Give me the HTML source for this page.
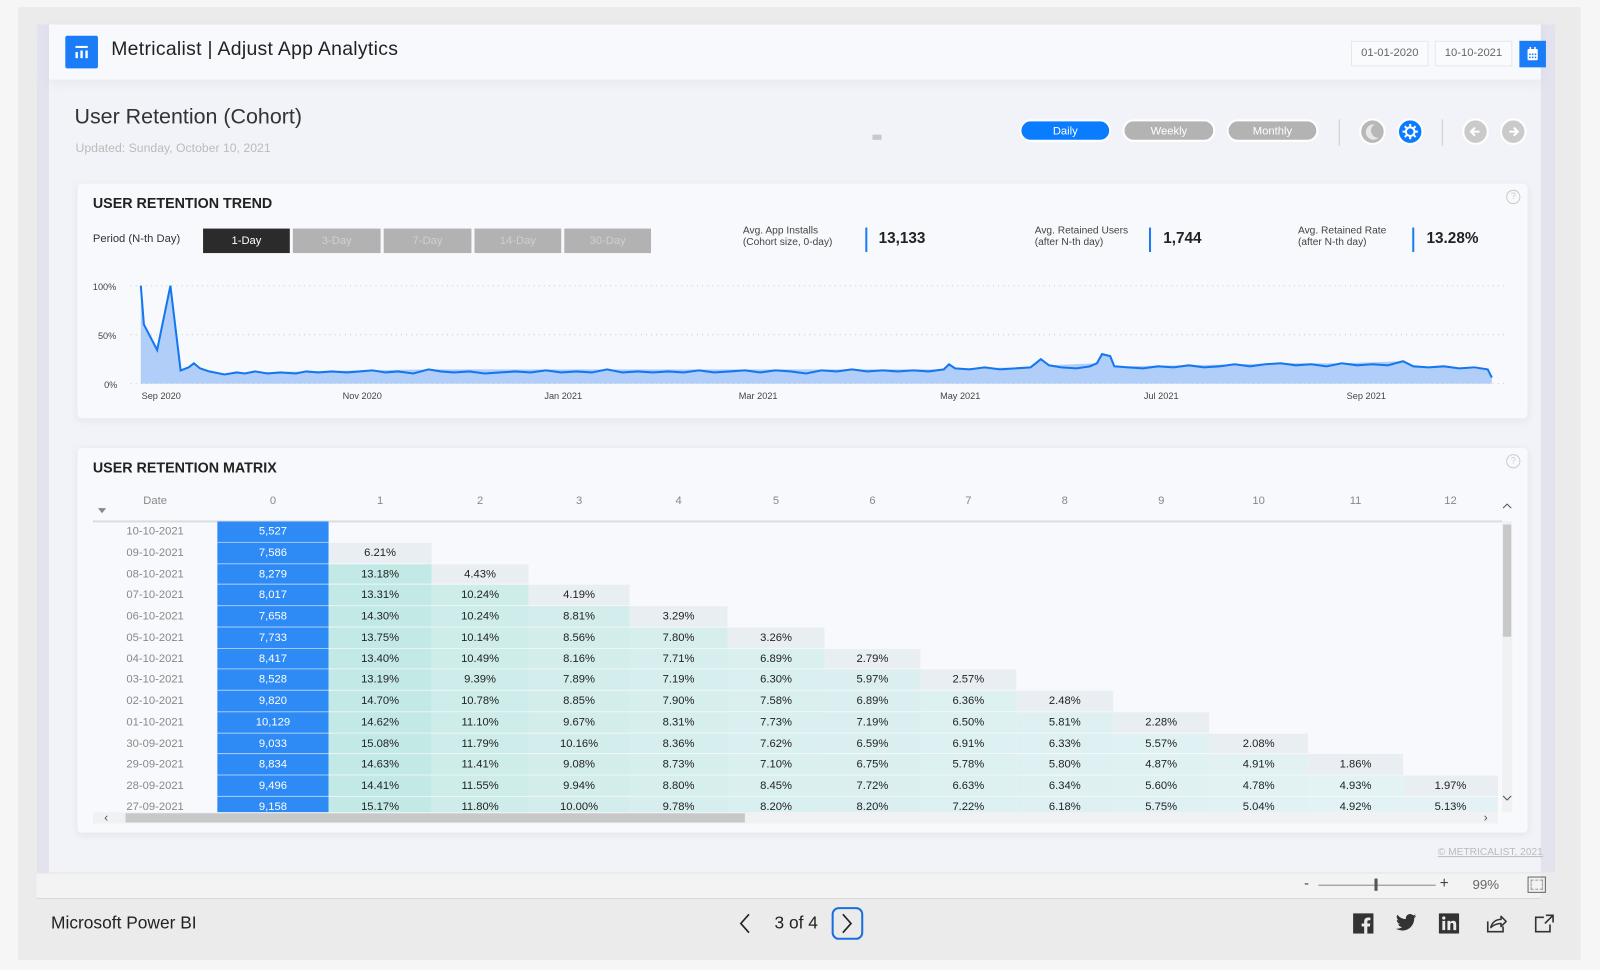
<!DOCTYPE html>
<html><head><meta charset="utf-8"><style>
*{margin:0;padding:0;box-sizing:border-box}
html,body{width:1600px;height:970px;overflow:hidden;background:#f6f6f6;font-family:"Liberation Sans",sans-serif}
#w{position:absolute;left:0;top:0;width:1568px;height:951px;transform:scale(1.020408);transform-origin:0 0;background:#f6f6f6}
.a{position:absolute}
.frame{left:18px;top:7px;width:1531px;height:934px;background:#ebebeb}
.canvas{left:36px;top:24px;width:1488px;height:831px;background:#f2f3f8}
.card{background:#f8f9fc;border-radius:4px;box-shadow:0 2px 8px rgba(150,155,190,.18)}
.pill{height:22px;border-radius:11px;color:#fff;font-size:11px;text-align:center;line-height:20px;border:2px solid #fff}
.circ{width:26px;height:26px;border-radius:50%;border:2px solid #fff}
.row{position:absolute;left:0;height:20.77px;display:flex;width:1377px}
.row div{height:100%;font-size:11px;line-height:20.77px;text-align:center;color:#222;border-bottom:1px solid rgba(255,255,255,.55)}
.row .d{width:122px;color:#888;background:transparent;border-bottom:none}
.row .c0{width:109px;background:#2e8af4;color:#fff}
.w1{width:101px;background:#c3e9e6}.w2{width:95px;background:#cdecea}.w3{width:99px;background:#d3edec}
.w4{width:96px;background:#d6eeee}.w5{width:95px;background:#d9eff0}.w6{width:94px;background:#dbeff1}
.w7{width:94px;background:#ddf0f2}.w8{width:95px;background:#dff0f3}.w9{width:94px;background:#e0f1f3}
.w10{width:97px;background:#e2f1f4}.w11{width:93px;background:#e3f2f5}.w12{width:93px;background:#e4f2f5}
.row .l{background:#e9eef3}
.hd{position:absolute;top:485px;font-size:11px;color:#888;text-align:center}
</style></head><body><div id="w">
<div class="a frame"></div>
<div class="a canvas"></div>
<div class="a" style="left:36px;top:24px;width:12px;height:831px;background:#e3e3ee"></div>
<div class="a" style="left:1510px;top:24px;width:14px;height:831px;background:#e3e3ee"></div>
<!-- header -->
<div class="a" style="left:48px;top:24px;width:1462px;height:54px;background:#f8f9fc;box-shadow:0 3px 10px rgba(160,165,200,.15)"></div>
<div class="a" style="left:64px;top:35px;width:32px;height:32px;background:#1a7cf7;border-radius:2px">
<svg width="32" height="32"><rect x="10" y="10" width="12" height="2" fill="#fff"/><rect x="10" y="16" width="2.3" height="6" fill="#fff"/><rect x="14.8" y="14.5" width="2.3" height="7.5" fill="#fff"/><rect x="19.7" y="14.5" width="2.3" height="7.5" fill="#fff"/></svg></div>
<div class="a" style="left:109px;top:38px;font-size:19px;color:#222;letter-spacing:.3px">Metricalist | Adjust App Analytics</div>
<div class="a" style="left:1324px;top:40px;width:76px;height:25px;border:1px solid #e6e7ee;font-size:11px;color:#666;text-align:center;line-height:23px;background:#fafbfd">01-01-2020</div>
<div class="a" style="left:1406px;top:40px;width:76px;height:25px;border:1px solid #e6e7ee;font-size:11px;color:#666;text-align:center;line-height:23px;background:#fafbfd">10-10-2021</div>
<div class="a" style="left:1489px;top:40px;width:26px;height:26px;background:#1a7cf7"><svg width="26" height="26"><rect x="8" y="8" width="10" height="11" rx="1" fill="#fff"/><rect x="10" y="6" width="1.5" height="3" fill="#fff"/><rect x="14.5" y="6" width="1.5" height="3" fill="#fff"/><g fill="#1a7cf7"><rect x="9.5" y="12.5" width="1.5" height="1.5"/><rect x="12.2" y="12.5" width="1.5" height="1.5"/><rect x="15" y="12.5" width="1.5" height="1.5"/><rect x="9.5" y="15.5" width="1.5" height="1.5"/><rect x="12.2" y="15.5" width="1.5" height="1.5"/><rect x="15" y="15.5" width="1.5" height="1.5"/></g></svg></div>
<!-- title -->
<div class="a" style="left:73px;top:103px;font-size:21px;color:#333">User Retention (Cohort)</div>
<div class="a" style="left:74px;top:138px;font-size:12px;color:#bbb">Updated: Sunday, October 10, 2021</div>
<div class="a" style="left:855px;top:132px;width:9px;height:5px;background:#c8c8cc"></div>
<div class="a pill" style="left:999px;top:117px;width:90px;background:#0a7cff">Daily</div>
<div class="a pill" style="left:1100px;top:117px;width:91px;background:#b3b3b3">Weekly</div>
<div class="a pill" style="left:1202px;top:117px;width:90px;background:#b3b3b3">Monthly</div>
<div class="a" style="left:1312px;top:117px;width:1px;height:26px;background:#ccc"></div>
<div class="a" style="left:1413px;top:117px;width:1px;height:26px;background:#ccc"></div>
<div class="a circ" style="left:1332px;top:116px;background:#b8b8b8"><svg width="22" height="22"><path d="M13 4 A7.5 7.5 0 1 0 17 17 A7 7 0 0 1 13 4Z" fill="#e8e8e8"/></svg></div>
<div class="a circ" style="left:1369px;top:116px;background:#0a7cff"><svg width="22" height="22"><g stroke="#fff" stroke-width="2"><circle cx="11" cy="11" r="4.2" fill="none"/><path d="M11 3.5v2.5M11 16v2.5M3.5 11h2.5M16 11h2.5M5.7 5.7l1.8 1.8M14.5 14.5l1.8 1.8M5.7 16.3l1.8-1.8M14.5 7.5l1.8-1.8"/></g></svg></div>
<div class="a circ" style="left:1433px;top:116px;background:#cacaca"><svg width="22" height="22"><path d="M15 11H7M10.5 7L6.5 11l4 4" stroke="#fff" stroke-width="2" fill="none"/></svg></div>
<div class="a circ" style="left:1470px;top:116px;background:#cacaca"><svg width="22" height="22"><path d="M7 11h8M11.5 7l4 4-4 4" stroke="#fff" stroke-width="2" fill="none"/></svg></div>
<!-- trend card -->
<div class="a card" style="left:76px;top:180px;width:1421px;height:230px"></div>
<div class="a" style="left:91px;top:191px;font-size:14px;font-weight:bold;color:#222">USER RETENTION TREND</div>
<div class="a" style="left:1476px;top:186px;width:14px;height:14px;border:1.5px solid #ccc;border-radius:50%;font-size:9px;color:#ccc;text-align:center;line-height:11px">?</div>
<div class="a" style="left:91px;top:228px;font-size:11px;color:#333">Period (N-th Day)</div>
<div class="a" style="left:199px;top:224px;width:85px;height:24px;background:#2b2b2b;color:#fff;font-size:11px;text-align:center;line-height:24px">1-Day</div>
<div class="a" style="left:287px;top:224px;width:86px;height:24px;background:#b2b2b2;color:#cfcfcf;font-size:11px;text-align:center;line-height:24px">3-Day</div>
<div class="a" style="left:376px;top:224px;width:86px;height:24px;background:#b2b2b2;color:#cfcfcf;font-size:11px;text-align:center;line-height:24px">7-Day</div>
<div class="a" style="left:465px;top:224px;width:85px;height:24px;background:#b2b2b2;color:#cfcfcf;font-size:11px;text-align:center;line-height:24px">14-Day</div>
<div class="a" style="left:553px;top:224px;width:85px;height:24px;background:#b2b2b2;color:#cfcfcf;font-size:11px;text-align:center;line-height:24px">30-Day</div>
<div class="a" style="left:728px;top:221px;font-size:10px;color:#444;line-height:11px">Avg. App Installs<br>(Cohort size, 0-day)</div>
<div class="a" style="left:848px;top:223px;width:2px;height:24px;background:#1a7cf7"></div>
<div class="a" style="left:861px;top:225px;font-size:15px;font-weight:bold;color:#222">13,133</div>
<div class="a" style="left:1014px;top:221px;font-size:10px;color:#444;line-height:11px">Avg. Retained Users<br>(after N-th day)</div>
<div class="a" style="left:1126px;top:223px;width:2px;height:24px;background:#1a7cf7"></div>
<div class="a" style="left:1140px;top:225px;font-size:15px;font-weight:bold;color:#222">1,744</div>
<div class="a" style="left:1272px;top:221px;font-size:10px;color:#444;line-height:11px">Avg. Retained Rate<br>(after N-th day)</div>
<div class="a" style="left:1384px;top:223px;width:2px;height:24px;background:#1a7cf7"></div>
<div class="a" style="left:1398px;top:225px;font-size:15px;font-weight:bold;color:#222">13.28%</div>
<svg class="a" style="left:0;top:0" width="1568" height="420">
<g stroke="#ccc" stroke-dasharray="1 4"><line x1="128" y1="280" x2="1475" y2="280"/><line x1="128" y1="328" x2="1475" y2="328"/><line x1="128" y1="376" x2="1475" y2="376"/></g>
<g font-size="9" fill="#444" font-family="Liberation Sans,sans-serif"><text x="91" y="284">100%</text><text x="96" y="332">50%</text><text x="102" y="380">0%</text>
<g text-anchor="middle"><text x="158" y="391">Sep 2020</text><text x="355" y="391">Nov 2020</text><text x="552" y="391">Jan 2021</text><text x="743" y="391">Mar 2021</text><text x="941" y="391">May 2021</text><text x="1138" y="391">Jul 2021</text><text x="1339" y="391">Sep 2021</text></g></g>
<path d="M138,280 L141,318 L154,343 L167,280 L177,363 L185,360 L190,356 L196,361 L205,364 L220,367 L232,365 L300,364 L420,362 L595,362 L835,362 L925,362 L930,357 L936,361 L1010,360 L1020,352 L1028,358 L1075,356 L1080,347 L1088,349 L1092,359 L1165,358 L1255,356 L1315,356 L1375,354 L1385,359 L1458,362 L1462,370 L1462,376 L138,376Z" fill="#a8c9f7" opacity=".9"/>
<path d="M138,280 L141,318 L154,343 L167,280 L177,363 L185,360 L190,356 L196,361 L205,364 L220,367 L232,365 L240,366 L250,364 L262,366 L275,365 L290,366 L300,364 L312,365 L325,364 L340,365 L352,364 L365,363 L378,365 L390,364 L405,366 L420,362 L432,364 L445,365 L460,364 L475,366 L490,365 L505,364 L520,365 L535,363 L550,365 L565,364 L580,365 L595,362 L610,365 L625,364 L640,365 L655,364 L670,365 L685,363 L700,365 L715,364 L730,363 L745,365 L760,363 L775,364 L790,366 L805,363 L820,364 L835,362 L850,364 L865,363 L880,364 L895,363 L910,364 L925,362 L930,357 L936,361 L950,362 L965,360 L980,362 L995,361 L1010,360 L1020,352 L1028,358 L1040,360 L1055,361 L1068,359 L1075,356 L1080,347 L1088,349 L1092,359 L1105,360 L1120,361 L1135,359 L1150,360 L1165,358 L1180,360 L1195,359 L1210,357 L1225,359 L1240,357 L1255,356 L1270,358 L1285,357 L1300,359 L1315,356 L1330,358 L1345,357 L1360,358 L1375,354 L1385,359 L1400,360 L1415,359 L1430,361 L1445,360 L1458,362 L1462,370" fill="none" stroke="#1577f0" stroke-width="2"/>
</svg>
<!-- matrix card -->
<div class="a card" style="left:76px;top:439px;width:1421px;height:377px"></div>
<div class="a" style="left:91px;top:450px;font-size:14px;font-weight:bold;color:#222">USER RETENTION MATRIX</div>
<div class="a" style="left:1476px;top:445px;width:14px;height:14px;border:1.5px solid #ccc;border-radius:50%;font-size:9px;color:#ccc;text-align:center;line-height:11px">?</div>
<div class="hd" style="left:91px;width:122px">Date</div>
<div class="a" style="left:96px;top:498px;width:0;height:0;border-left:4px solid transparent;border-right:4px solid transparent;border-top:5px solid #888"></div>
<div class="hd" style="left:213px;width:109px">0</div><div class="hd" style="left:322px;width:101px">1</div><div class="hd" style="left:423px;width:95px">2</div><div class="hd" style="left:518px;width:99px">3</div><div class="hd" style="left:617px;width:96px">4</div><div class="hd" style="left:713px;width:95px">5</div><div class="hd" style="left:808px;width:94px">6</div><div class="hd" style="left:902px;width:94px">7</div><div class="hd" style="left:996px;width:95px">8</div><div class="hd" style="left:1091px;width:94px">9</div><div class="hd" style="left:1185px;width:97px">10</div><div class="hd" style="left:1282px;width:93px">11</div><div class="hd" style="left:1375px;width:93px">12</div>
<div class="a" style="left:91px;top:510px;width:1381px;height:1.5px;background:#ddd"></div>
<div class="a" style="left:91px;top:511px;width:1377px;height:285px;overflow:hidden">
<div class="row" style="top:0"><div class="d">10-10-2021</div><div class="c0">5,527</div></div>
<div class="row" style="top:20.77px"><div class="d">09-10-2021</div><div class="c0">7,586</div><div class="w1 l">6.21%</div></div>
<div class="row" style="top:41.54px"><div class="d">08-10-2021</div><div class="c0">8,279</div><div class="w1">13.18%</div><div class="w2 l">4.43%</div></div>
<div class="row" style="top:62.31px"><div class="d">07-10-2021</div><div class="c0">8,017</div><div class="w1">13.31%</div><div class="w2">10.24%</div><div class="w3 l">4.19%</div></div>
<div class="row" style="top:83.08px"><div class="d">06-10-2021</div><div class="c0">7,658</div><div class="w1">14.30%</div><div class="w2">10.24%</div><div class="w3">8.81%</div><div class="w4 l">3.29%</div></div>
<div class="row" style="top:103.85px"><div class="d">05-10-2021</div><div class="c0">7,733</div><div class="w1">13.75%</div><div class="w2">10.14%</div><div class="w3">8.56%</div><div class="w4">7.80%</div><div class="w5 l">3.26%</div></div>
<div class="row" style="top:124.62px"><div class="d">04-10-2021</div><div class="c0">8,417</div><div class="w1">13.40%</div><div class="w2">10.49%</div><div class="w3">8.16%</div><div class="w4">7.71%</div><div class="w5">6.89%</div><div class="w6 l">2.79%</div></div>
<div class="row" style="top:145.39px"><div class="d">03-10-2021</div><div class="c0">8,528</div><div class="w1">13.19%</div><div class="w2">9.39%</div><div class="w3">7.89%</div><div class="w4">7.19%</div><div class="w5">6.30%</div><div class="w6">5.97%</div><div class="w7 l">2.57%</div></div>
<div class="row" style="top:166.16px"><div class="d">02-10-2021</div><div class="c0">9,820</div><div class="w1">14.70%</div><div class="w2">10.78%</div><div class="w3">8.85%</div><div class="w4">7.90%</div><div class="w5">7.58%</div><div class="w6">6.89%</div><div class="w7">6.36%</div><div class="w8 l">2.48%</div></div>
<div class="row" style="top:186.93px"><div class="d">01-10-2021</div><div class="c0">10,129</div><div class="w1">14.62%</div><div class="w2">11.10%</div><div class="w3">9.67%</div><div class="w4">8.31%</div><div class="w5">7.73%</div><div class="w6">7.19%</div><div class="w7">6.50%</div><div class="w8">5.81%</div><div class="w9 l">2.28%</div></div>
<div class="row" style="top:207.7px"><div class="d">30-09-2021</div><div class="c0">9,033</div><div class="w1">15.08%</div><div class="w2">11.79%</div><div class="w3">10.16%</div><div class="w4">8.36%</div><div class="w5">7.62%</div><div class="w6">6.59%</div><div class="w7">6.91%</div><div class="w8">6.33%</div><div class="w9">5.57%</div><div class="w10 l">2.08%</div></div>
<div class="row" style="top:228.47px"><div class="d">29-09-2021</div><div class="c0">8,834</div><div class="w1">14.63%</div><div class="w2">11.41%</div><div class="w3">9.08%</div><div class="w4">8.73%</div><div class="w5">7.10%</div><div class="w6">6.75%</div><div class="w7">5.78%</div><div class="w8">5.80%</div><div class="w9">4.87%</div><div class="w10">4.91%</div><div class="w11 l">1.86%</div></div>
<div class="row" style="top:249.24px"><div class="d">28-09-2021</div><div class="c0">9,496</div><div class="w1">14.41%</div><div class="w2">11.55%</div><div class="w3">9.94%</div><div class="w4">8.80%</div><div class="w5">8.45%</div><div class="w6">7.72%</div><div class="w7">6.63%</div><div class="w8">6.34%</div><div class="w9">5.60%</div><div class="w10">4.78%</div><div class="w11">4.93%</div><div class="w12 l">1.97%</div></div>
<div class="row" style="top:270.01px"><div class="d">27-09-2021</div><div class="c0">9,158</div><div class="w1">15.17%</div><div class="w2">11.80%</div><div class="w3">10.00%</div><div class="w4">9.78%</div><div class="w5">8.20%</div><div class="w6">8.20%</div><div class="w7">7.22%</div><div class="w8">6.18%</div><div class="w9">5.75%</div><div class="w10">5.04%</div><div class="w11">4.92%</div><div class="w12">5.13%</div></div>
</div>
<!-- scrollbars -->
<div class="a" style="left:91px;top:796px;width:1377px;height:11px;background:#f0f1f3"></div>
<div class="a" style="left:123px;top:797px;width:607px;height:9px;background:#c8c8c8"></div>
<div class="a" style="left:102px;top:794px;font-size:12px;color:#555">&lsaquo;</div>
<div class="a" style="left:1454px;top:794px;font-size:12px;color:#555">&rsaquo;</div>
<div class="a" style="left:1472px;top:511px;width:10px;height:285px;background:#f0f1f3"></div>
<div class="a" style="left:1473px;top:514px;width:8px;height:110px;background:#c8c8c8"></div>
<svg class="a" style="left:1472px;top:492px" width="10" height="8"><path d="M1 6l4-4 4 4" stroke="#555" fill="none"/></svg>
<svg class="a" style="left:1472px;top:778px" width="10" height="8"><path d="M1 2l4 4 4-4" stroke="#555" fill="none"/></svg>
<div class="a" style="right:56px;top:830px;font-size:10px;color:#bbb;text-decoration:underline;white-space:nowrap">© METRICALIST, 2021</div>
<!-- zoom bar -->
<div class="a" style="left:36px;top:855px;width:1474px;height:26px;background:#f3f3f3;border-top:1px solid #e3e3e3;border-bottom:1px solid #d8d8d8"></div>
<div class="a" style="left:1278px;top:857px;font-size:14px;color:#444">-</div>
<div class="a" style="left:1292px;top:867px;width:115px;height:1px;background:#888"></div>
<div class="a" style="left:1347px;top:861px;width:3px;height:12px;background:#555"></div>
<div class="a" style="left:1411px;top:857px;font-size:15px;color:#444">+</div>
<div class="a" style="left:1443px;top:859px;font-size:13px;color:#666">99%</div>
<div class="a" style="left:1497px;top:859px;width:18px;height:16px;border:1.5px solid #666"></div>
<div class="a" style="left:1500px;top:862px;width:12px;height:10px;background:#f3f3f3;border:1px dashed #999"></div>
<!-- footer -->
<div class="a" style="left:50px;top:895px;font-size:17px;color:#222">Microsoft Power BI</div>
<svg class="a" style="left:720px;top:893px" width="20" height="24"><path d="M14 3L6 12l8 9" stroke="#222" stroke-width="1.6" fill="none"/></svg>
<div class="a" style="left:759px;top:895px;font-size:17px;color:#222">3 of 4</div>
<div class="a" style="left:815px;top:889px;width:31px;height:32px;border:2px solid #1a6fe0;border-radius:7px"></div>
<svg class="a" style="left:820px;top:893px" width="20" height="24"><path d="M6 3l8 9-8 9" stroke="#222" stroke-width="1.6" fill="none"/></svg>
<svg class="a" style="left:1326px;top:895px" width="20" height="20"><rect width="20" height="20" fill="#333"/><path d="M14 20v-7h2.5l.4-3H14V8.3c0-.8.3-1.4 1.4-1.4H17V4.2c-.3 0-1.2-.1-2.3-.1-2.3 0-3.8 1.4-3.8 3.9V10H8.4v3h2.5v7z" fill="#ebebeb"/></svg>
<svg class="a" style="left:1368px;top:895px" width="20" height="18" viewBox="0 0 24 20"><path d="M24 2.4c-.9.4-1.8.6-2.8.8 1-.6 1.8-1.6 2.2-2.7-1 .6-2 1-3.1 1.2C19.3.7 18 0 16.6 0c-2.7 0-4.9 2.200-4.9 4.9 0 .4 0 .8.1 1.1C7.7 5.8 4.1 3.9 1.7.9c-.4.7-.7 1.6-.7 2.5 0 1.7.9 3.2 2.2 4.1-.8 0-1.6-.2-2.2-.6v.1c0 2.4 1.7 4.4 3.9 4.8-.4.1-.8.2-1.3.2-.3 0-.6 0-.9-.1.6 2 2.4 3.4 4.6 3.4-1.7 1.3-3.8 2.1-6.1 2.1-.4 0-.8 0-1.2-.1 2.200 1.4 4.8 2.2 7.5 2.2 9.1 0 14-7.5 14-14v-.6c1-.7 1.8-1.6 2.5-2.5z" fill="#333"/></svg>
<svg class="a" style="left:1410px;top:895px" width="20" height="20"><rect width="20" height="20" rx="1" fill="#333"/><rect x="3.5" y="7.5" width="2.8" height="9" fill="#ebebeb"/><circle cx="4.9" cy="4.6" r="1.6" fill="#ebebeb"/><path d="M8.5 7.5h2.7v1.3c.5-.9 1.6-1.5 2.9-1.500 2.5 0 3 1.6 3 3.8v5.4h-2.8v-4.8c0-1.1-.1-2.2-1.4-2.2s-1.6 1-1.6 2.1v4.9H8.5z" fill="#ebebeb"/></svg>
<svg class="a" style="left:1455px;top:894px" width="22" height="22"><path d="M3 9v10h15v-5" stroke="#333" stroke-width="1.6" fill="none"/><path d="M6 15c1-5 5-8 10-8V4l5 5-5 5v-3c-4 0-7 1-10 4z" stroke="#333" stroke-width="1.5" fill="none" stroke-linejoin="round"/></svg>
<svg class="a" style="left:1502px;top:895px" width="22" height="20"><path d="M11 4H3v14h14v-7" stroke="#333" stroke-width="1.6" fill="none"/><path d="M13 2h7v7M20 2l-8 8" stroke="#333" stroke-width="1.6" fill="none"/></svg>
</div></body></html>
